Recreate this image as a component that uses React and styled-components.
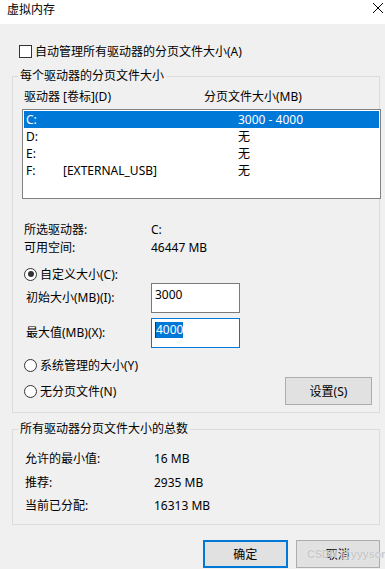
import styled, { createGlobalStyle } from "styled-components";

const GlobalStyle = createGlobalStyle`
  html, body {
    margin: 0;
    padding: 0;
    background: #f0f0f0;
  }
  body {
    font-family: "Noto Sans", "Noto Sans CJK SC", sans-serif;
    font-size: 12px;
    color: #000;
  }
  * { box-sizing: border-box; }
`;

const Dialog = styled.div`
  position: relative;
  width: 385px;
  height: 569px;
  background: #f0f0f0;
  overflow: hidden;
`;

const TitleBar = styled.div`
  height: 24px;
  background: #fff;
  display: flex;
  justify-content: space-between;
  align-items: flex-start;
  padding: 0 2px 0 7px;
`;

const Title = styled.span`
  margin-top: 2px;
  line-height: 16px;
`;

const CloseIcon = styled.svg`
  margin-top: 3px;
  width: 10px;
  height: 10px;
`;

const Body = styled.div`
  padding: 0 5px 0 12px;
`;

const CheckRow = styled.label`
  display: flex;
  align-items: center;
  gap: 3px;
  height: 16px;
  margin-top: 19px;
  padding-left: 7px;
`;

const CheckBox = styled.span`
  width: 13px;
  height: 13px;
  border: 1px solid #333;
  background: #fff;
`;

const Group = styled.fieldset`
  margin: ${({ $top }) => $top}px 0 0;
  border: 1px solid #dcdcdc;
  padding: 0 0 ${({ $bottom }) => $bottom}px 5px;
  min-width: 0;
`;

const Legend = styled.legend`
  padding: 0 2px;
  line-height: 16px;
  font-size: 12px;
`;

const Header = styled.div`
  display: grid;
  grid-template-columns: 180px 1fr;
  margin-top: 5px;
  padding-left: 6px;
  line-height: 16px;
`;

const ListBox = styled.div`
  margin: 4px 0 0 4px;
  width: calc(100% - 2px);
  height: 90px;
  border: 1px solid #828282;
  background: #fff;
  padding: 1px;
`;

const DriveRow = styled.div`
  display: grid;
  grid-template-columns: 37px 175px 1fr;
  height: 17px;
  line-height: 17px;
  padding-left: 2px;
  background: ${({ $selected }) => ($selected ? "#0078d7" : "transparent")};
  color: ${({ $selected }) => ($selected ? "#fff" : "#000")};
`;

const InfoGrid = styled.div`
  display: grid;
  grid-template-columns: ${({ $label }) => $label}px 1fr;
  margin-top: ${({ $top }) => $top}px;
  padding-left: ${({ $left }) => $left}px;
  line-height: ${({ $line }) => $line}px;
`;

const RadioRow = styled.label`
  display: flex;
  align-items: center;
  gap: 3px;
  height: 16px;
  margin-top: ${({ $top }) => $top || 0}px;
  padding-left: 6px;
`;

const Radio = styled.span`
  position: relative;
  width: 13px;
  height: 13px;
  border: 1px solid #333;
  border-radius: 50%;
  background: #fff;

  &::after {
    content: "";
    display: ${({ $checked }) => ($checked ? "block" : "none")};
    position: absolute;
    left: 2.5px;
    top: 2.5px;
    width: 6px;
    height: 6px;
    border-radius: 50%;
    background: #333;
  }
`;

const SizeRow = styled.div`
  display: flex;
  align-items: center;
  margin-top: ${({ $top }) => $top}px;
`;

const SizeLabel = styled.span`
  width: 133px;
  padding-left: 8px;
  line-height: 16px;
`;

const Edit = styled.div`
  width: 89px;
  height: 30px;
  background: #fff;
  border: 1px solid ${({ $focused }) => ($focused ? "#0078d7" : "#7a7a7a")};
  padding: 3px 3px 0;
  line-height: 16px;
`;

const Selected = styled.span`
  display: inline-block;
  background: #0078d7;
  color: #fff;
  border-left: 1px solid #333;
`;

const BottomRow = styled.div`
  display: flex;
  justify-content: space-between;
  align-items: center;
  margin-top: 4px;
  padding-right: 7px;
`;

const Button = styled.div`
  width: 87px;
  height: 28px;
  display: flex;
  align-items: center;
  justify-content: center;
  background: #e1e1e1;
  border: ${({ $default }) => ($default ? "2px solid #0078d7" : "1px solid #adadad")};
`;

const Footer = styled.div`
  display: flex;
  gap: 8px;
  margin-top: 15px;
  padding-left: 191px;
`;

const Watermark = styled.span`
  position: absolute;
  right: 0;
  bottom: 9px;
  font-family: "Liberation Sans", Arial, sans-serif;
  font-weight: bold;
  font-size: 11px;
  color: rgba(190, 190, 190, 0.85);
  text-shadow: 0 0 1px #fff;
  letter-spacing: -0.2px;
`;

const drives = [
  { name: "C:", label: "", size: "3000 - 4000", selected: true },
  { name: "D:", label: "", size: "无" },
  { name: "E:", label: "", size: "无" },
  { name: "F:", label: "[EXTERNAL_USB]", size: "无" },
];

export default function App() {
  return (
    <>
      <GlobalStyle />
      <Dialog>
        <TitleBar>
          <Title>虚拟内存</Title>
          <CloseIcon viewBox="0 0 10 10">
            <path d="M0 0 L10 10 M10 0 L0 10" stroke="#000" strokeWidth="1" />
          </CloseIcon>
        </TitleBar>

        <Body>
          <CheckRow>
            <CheckBox />
            自动管理所有驱动器的分页文件大小(A)
          </CheckRow>

          <Group $top={9} $bottom={7}>
            <Legend>每个驱动器的分页文件大小</Legend>
            <Header>
              <span>驱动器 [卷标](D)</span>
              <span>分页文件大小(MB)</span>
            </Header>
            <ListBox>
              {drives.map((d) => (
                <DriveRow key={d.name} $selected={d.selected}>
                  <span>{d.name}</span>
                  <span>{d.label}</span>
                  <span>{d.size}</span>
                </DriveRow>
              ))}
            </ListBox>

            <InfoGrid $label={127} $top={22} $left={6} $line={18}>
              <span>所选驱动器:</span>
              <span>C:</span>
              <span>可用空间:</span>
              <span>46447 MB</span>
            </InfoGrid>

            <RadioRow $top={9}>
              <Radio $checked />
              自定义大小(C):
            </RadioRow>
            <SizeRow $top={1}>
              <SizeLabel>初始大小(MB)(I):</SizeLabel>
              <Edit>3000</Edit>
            </SizeRow>
            <SizeRow $top={5}>
              <SizeLabel>最大值(MB)(X):</SizeLabel>
              <Edit $focused>
                <Selected>4000</Selected>
              </Edit>
            </SizeRow>

            <RadioRow $top={9}>
              <Radio />
              系统管理的大小(Y)
            </RadioRow>
            <BottomRow>
              <RadioRow>
                <Radio />
                无分页文件(N)
              </RadioRow>
              <Button>设置(S)</Button>
            </BottomRow>
          </Group>

          <Group $top={8} $bottom={6}>
            <Legend>所有驱动器分页文件大小的总数</Legend>
            <InfoGrid $label={129} $top={10} $left={7} $line={23.5}>
              <span>允许的最小值:</span>
              <span>16 MB</span>
              <span>推荐:</span>
              <span>2935 MB</span>
              <span>当前已分配:</span>
              <span>16313 MB</span>
            </InfoGrid>
          </Group>

          <Footer>
            <Button $default>确定</Button>
            <Button>取消</Button>
          </Footer>
        </Body>
        <Watermark>CSDN @yyysor</Watermark>
      </Dialog>
    </>
  );
}
